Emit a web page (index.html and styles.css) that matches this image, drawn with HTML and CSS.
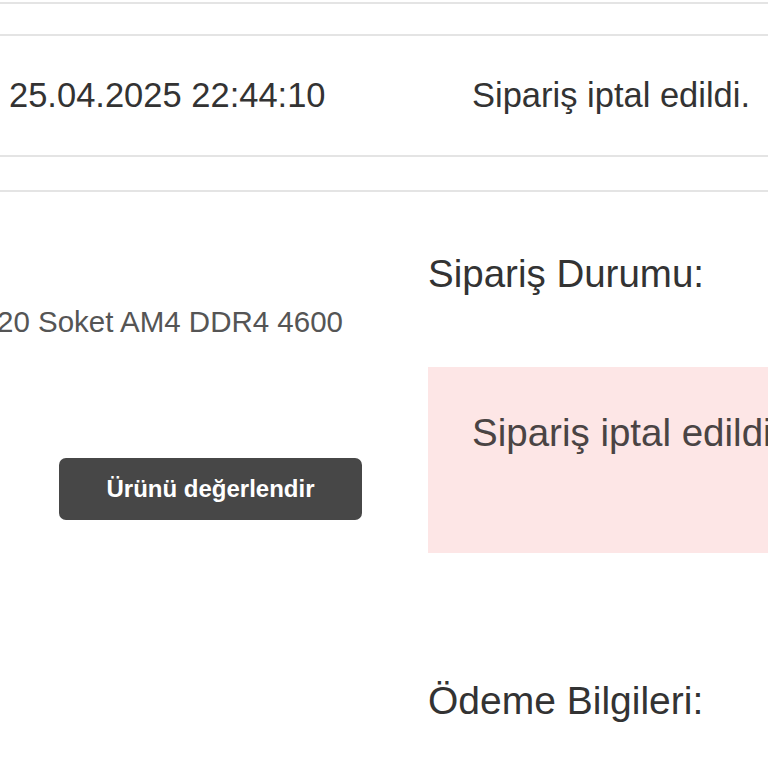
FILE: index.html
```html
<!DOCTYPE html>
<html lang="tr">
<head>
    <meta charset="UTF-8">
    <meta name="viewport" content="width=device-width, initial-scale=1.0">
    <title>Sipariş Detayı</title>
    <link rel="stylesheet" href="styles.css">
</head>
<body>
    <div class="page">
        <div class="history">
            <div class="history-row spacer"></div>
            <div class="history-row">
                <span class="history-date">25.04.2025 22:44:10</span>
                <span class="history-note">Sipariş iptal edildi.</span>
            </div>
            <div class="history-row spacer short"></div>
        </div>

        <div class="detail">
            <div class="product">
                <div class="product-name">
                    <span>ASUS PRIME A520M-K AMD A520 Soket AM4 DDR4 4600</span>
                </div>
                <button class="review-btn">Ürünü değerlendir</button>
            </div>
            <div class="status">
                <h3>Sipariş Durumu:</h3>
                <div class="status-box">Sipariş iptal edildi</div>
                <h3 class="payment-title">Ödeme Bilgileri:</h3>
            </div>
        </div>
    </div>
</body>
</html>
```

FILE: styles.css
```css
* {
    box-sizing: border-box;
    margin: 0;
    padding: 0;
}

html, body {
    overflow: hidden;
}

body {
    font-family: "Liberation Sans", Arial, sans-serif;
    background: #fff;
    color: #333;
    width: 768px;
    height: 768px;
}

.page {
    width: 1000px;
}

.history {
    margin-top: 2px;
    border-top: 2px solid #e4e4e4;
}

.history-row {
    display: grid;
    grid-template-columns: 463px 1fr;
    align-items: center;
    height: 121px;
    padding-left: 9px;
    border-bottom: 2px solid #e4e4e4;
    font-size: 34.5px;
    color: #333;
}

.history-row.spacer {
    height: 32px;
}

.history-row.short {
    height: 35px;
}

.detail {
    display: grid;
    grid-template-columns: 428px 1fr;
}

.product {
    display: flex;
    flex-direction: column;
    padding-top: 113px;
}

.product-name {
    display: flex;
    justify-content: flex-end;
    width: 343px;
    white-space: nowrap;
    font-size: 29.5px;
    line-height: 34px;
    color: #555;
}

.review-btn {
    margin: 119px 0 0 59px;
    width: 303px;
    height: 62px;
    border: none;
    border-radius: 7px;
    background: #474747;
    color: #fff;
    font-family: "Liberation Sans", Arial, sans-serif;
    font-weight: bold;
    font-size: 24px;
    cursor: pointer;
}

.status {
    padding-top: 60px;
}

.status h3 {
    font-weight: normal;
    font-size: 38.5px;
    line-height: 44px;
    color: #333;
}

.status-box {
    margin-top: 71px;
    height: 186px;
    padding: 44px 0 0 44px;
    background: #fde6e6;
    font-size: 38.5px;
    line-height: 44px;
    color: #4a4444;
    white-space: nowrap;
}

.status h3.payment-title {
    margin-top: 126px;
    font-size: 39px;
}
```
